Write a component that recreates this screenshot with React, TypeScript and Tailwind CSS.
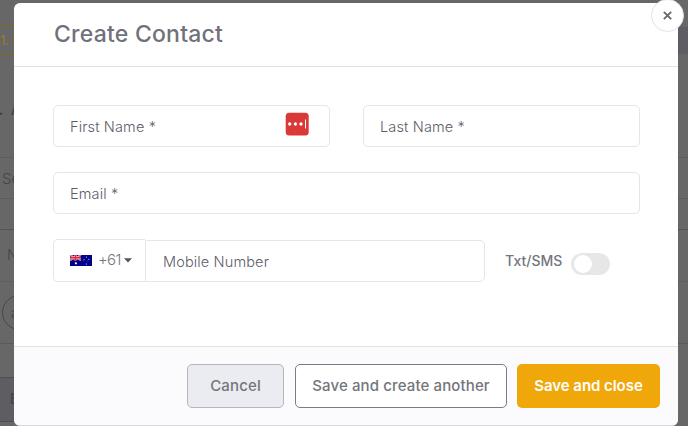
import type { ReactNode } from "react";
import clsx from "clsx";

type FieldProps = {
  className?: string;
  children: ReactNode;
};

function Field({ className, children }: FieldProps) {
  return (
    <label
      className={clsx(
        "flex h-[42px] shrink-0 items-center border border-[#e5e6ec] bg-white pt-0.5 text-[14.5px] font-light tracking-[0.14px] text-[#5c5d68]",
        className,
      )}
    >
      {children}
    </label>
  );
}

function AustraliaFlag() {
  return (
    <svg width="22" height="11" viewBox="0 0 22 11" className="shrink-0">
      <rect width="22" height="11" fill="#00008b" />
      <path d="M0 0L11 5.5M11 0L0 5.5" stroke="#fff" strokeWidth="1.3" />
      <path d="M0 0L11 5.5M11 0L0 5.5" stroke="#f03040" strokeWidth="0.8" />
      <path d="M5.5 0V5.5M0 2.75H11" stroke="#fff" strokeWidth="2" />
      <path d="M5.5 0V5.5M0 2.75H11" stroke="#f01c30" strokeWidth="1.3" />
      <circle cx="5.9" cy="8.3" r="1.1" fill="#fff" />
      <circle cx="16.4" cy="1.9" r="0.5" fill="#fff" />
      <circle cx="14" cy="4.8" r="0.5" fill="#fff" />
      <circle cx="18.8" cy="4.2" r="0.5" fill="#fff" />
      <circle cx="17.2" cy="6" r="0.3" fill="#fff" />
      <circle cx="16.4" cy="9" r="0.55" fill="#fff" />
    </svg>
  );
}

function PasswordManagerIcon() {
  return (
    <svg width="24" height="24" viewBox="0 0 24 24">
      <rect x="0.7" y="0.8" width="23" height="22.6" rx="3.5" fill="#d93a38" />
      <circle cx="4.7" cy="12" r="1.65" fill="#fff" />
      <circle cx="10.4" cy="12" r="1.65" fill="#fff" />
      <circle cx="16" cy="12" r="1.65" fill="#fff" />
      <rect x="20" y="7.5" width="1" height="9" fill="#fff" />
    </svg>
  );
}

// The dimmed page behind the dialog
function Backdrop() {
  return (
    <div className="flex h-full flex-col bg-[#676768] text-[#44444c]">
      <div className="flex h-[158px] flex-col border-b border-[#5d5d60] pt-[25px]">
        <div className="flex h-[31px] justify-between">
          <div className="w-40 border-y border-[#8a671d] pt-[4px] text-[13.5px] leading-[20px] tracking-[-0.4px] text-[#a0771f]">
            1. S
          </div>
          <div className="mt-0.5 h-[27px] w-20 bg-[#5d5d63]" />
        </div>
        <div className="mt-[38px] -ml-0.5 text-xl leading-[28px] tracking-[0.5px]">. A</div>
      </div>
      <div className="h-[41px] border-b border-[#5d5d60] pt-[10px] pl-0.5 text-[15px] leading-[22px] font-light">
        Se
      </div>
      <div className="h-[31px] border-b border-[#555559]" />
      <div className="h-[52px] border-b border-[#5f5f62] pt-[15px] pl-[7px] text-[14px] leading-[20px] font-light">
        N
      </div>
      <div className="h-[62px] border-b border-[#5a5a5e] pt-[13px] pl-0.5">
        <div className="flex size-[35px] items-center rounded-full border border-[#47474d] pl-2 text-sm">
          a
        </div>
      </div>
      <div className="mt-[33px] h-[45px] w-40 border-y border-[#4e4e53] bg-[#5d5d63] pl-[10px] text-[14px] leading-[42px] font-medium">
        E
      </div>
    </div>
  );
}

export default function App() {
  return (
    <div className="relative h-[426px] w-[688px] overflow-hidden font-['Inter','Liberation_Sans',sans-serif]">
      <Backdrop />

      <div className="absolute top-[3px] left-[14px] flex h-[423px] w-[664px] flex-col rounded-md border-b border-[#d9dade] bg-white">
        <header className="flex h-16 items-center border-b border-[#e1e2e6] pl-10">
          <h1 className="text-[23px] leading-none font-medium tracking-[0.22px] text-[#70717b]">
            Create Contact
          </h1>
        </header>

        <main className="flex flex-1 flex-col gap-[25px] pt-[38px] pl-[39px]">
          <div className="flex gap-[33px]">
            <Field className="w-[277px] justify-between rounded-[5px] pr-5 pl-4">
              <span>First Name *</span>
              <span className="-mt-[7px]">
                <PasswordManagerIcon />
              </span>
            </Field>
            <Field className="w-[277px] rounded-[5px] pl-4">
              <span>Last Name *</span>
            </Field>
          </div>
          <Field className="w-[587px] rounded-[5px] pl-4">
            <span>Email *</span>
          </Field>
          <div className="flex">
            <button
              type="button"
              className="flex h-[43px] w-[92px] items-center rounded-l-[5px] border border-r-0 border-[#e5e6ec] pl-4 text-[#77777d]"
            >
              <AustraliaFlag />
              <span className="ml-1.5 text-[15px] font-light tracking-[-0.7px]">+61</span>
              <svg width="8" height="5" viewBox="0 0 8 5" className="ml-[3px]">
                <path d="M0 0.3H8L4 4.6Z" fill="#55565c" />
              </svg>
            </button>
            <Field className="mt-px w-[340px] rounded-r-[5px] pl-[17px]">
              <span>Mobile Number</span>
            </Field>
            <span className="mt-[11px] ml-5 text-[14px] leading-[22px] font-medium text-[#74757f]">
              Txt/SMS
            </span>
            <button
              type="button"
              role="switch"
              aria-checked={false}
              aria-label="Txt/SMS"
              className="mt-[14px] ml-[9px] flex h-[22px] w-[39px] items-center rounded-full bg-[#e7e7e8] pl-[3px]"
            >
              <span className="size-[18px] rounded-full bg-white" />
            </button>
          </div>
        </main>

        <footer className="flex h-[79px] justify-end gap-[10px] rounded-b-md border-t border-[#e1e2e6] bg-[#fbfbfd] pt-[17px] pr-[18px] text-[15px] font-medium text-[#74757c]">
          <button
            type="button"
            className="mr-px h-11 w-[97px] rounded-[5px] border border-[#b5b6bb] bg-[#ebecf1] tracking-[0.15px]"
          >
            Cancel
          </button>
          <button
            type="button"
            className="h-11 w-[212px] rounded-[5px] border border-[#7b7c83] bg-white tracking-[0.12px] whitespace-nowrap"
          >
            Save and create another
          </button>
          <button
            type="button"
            className="h-11 w-[143px] rounded-[5px] bg-[#f0a70a] font-semibold tracking-[-0.05px] whitespace-nowrap text-white"
          >
            Save and close
          </button>
        </footer>

        <button
          type="button"
          aria-label="Close"
          className="absolute -top-[4px] right-[-6px] flex size-[33px] items-center justify-center rounded-full border border-[#e2e3e8] bg-white"
        >
          <svg width="9" height="9" viewBox="0 0 9 9" className="-mt-px">
            <path d="M0.8 0.8L8.2 8.2M8.2 0.8L0.8 8.2" stroke="#62636d" strokeWidth="1.7" />
          </svg>
        </button>
      </div>
    </div>
  );
}
